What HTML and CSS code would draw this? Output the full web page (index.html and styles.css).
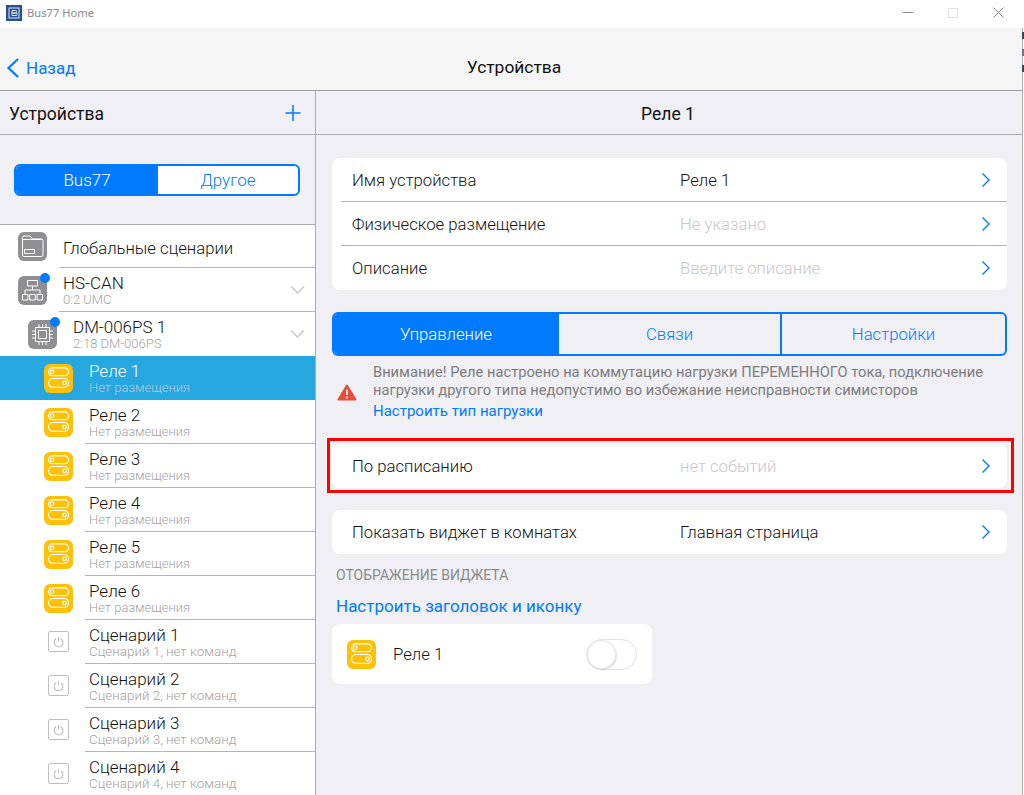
FILE: index.html
```html
<!DOCTYPE html>
<html lang="ru">
<head>
    <meta charset="UTF-8">
    <title>Bus77 Home</title>
    <link rel="stylesheet" href="styles.css">
</head>
<body>
    <svg class="sprites" width="0" height="0">
        <symbol id="relay" viewBox="0 0 29 29">
            <rect width="29" height="29" rx="6" fill="#ffc107"/>
            <g fill="none" stroke="#fff" stroke-width="1.1">
                <rect x="4.5" y="3.9" width="20" height="7.8" rx="3.9"/>
                <rect x="4.5" y="14.5" width="20" height="8.8" rx="4.4"/>
                <circle cx="8.2" cy="7.8" r="1.8"/>
                <circle cx="20.5" cy="18.9" r="1.8"/>
            </g>
        </symbol>
        <symbol id="scene" viewBox="0 0 22 22">
            <rect x=".5" y=".5" width="20" height="20" rx="1.5" fill="#fff" stroke="#bdbdbd"/>
            <g fill="none" stroke="#bdbdbd" stroke-width="1.1">
                <path d="M8 7.8a4.4 4.4 0 1 0 5 0"/>
                <path d="M10.5 5.6v4.6"/>
            </g>
        </symbol>
        <symbol id="chevron" viewBox="0 0 10 16">
            <path d="M1.5 1.5L8 8l-6.500 6.500" fill="none" stroke="#007aff" stroke-width="1.4"/>
        </symbol>
        <symbol id="down" viewBox="0 0 16 10">
            <path d="M2 1.500L8.500 8 15 1.500" fill="none" stroke="#c7c7cc" stroke-width="1.5"/>
        </symbol>
    </svg>

    <header class="titlebar">
        <svg class="app-icon" width="16" height="16" viewBox="0 0 16 16">
            <rect width="16" height="16" fill="#27508f"/>
            <rect x="3" y="3" width="10" height="10" fill="none" stroke="#dbe4f2"/>
            <path d="M6 5.500h3.500a1 1 0 0 1 0 2.500H6zM6 8h4a1.200 1.200 0 0 1 0 2.500H6z" fill="none" stroke="#dbe4f2"/>
        </svg>
        <span class="app-name">Bus77 Home</span>
        <div class="window-buttons">
            <span class="win-min"></span>
            <span class="win-max"></span>
            <svg width="11" height="11" viewBox="0 0 11 11"><path d="M.5.500l10 10M10.500.500l-10 10" stroke="#8a8a8a" fill="none"/></svg>
        </div>
    </header>

    <nav class="navbar">
        <a class="back">
            <svg width="13" height="20" viewBox="0 0 13 20"><path d="M12 1L2.500 10 12 19" fill="none" stroke="#007aff" stroke-width="2.200"/></svg>
            Назад
        </a>
        <div class="nav-title">Устройства</div>
    </nav>

    <div class="columns">
        <aside class="sidebar">
            <div class="side-head">
                <span>Устройства</span>
                <svg width="16" height="16" viewBox="0 0 16 16"><path d="M8 0v16M.5 8h15" stroke="#007aff" stroke-width="1.500"/></svg>
            </div>
            <div class="segment side-segment">
                <div class="seg active">Bus77</div>
                <div class="seg">Другое</div>
            </div>
            <ul class="tree">
                <li class="row lvl0">
                    <svg class="gray-icon" width="29" height="29" viewBox="0 0 29 29">
                        <rect width="29" height="29" rx="6" fill="#8e8e93"/>
                        <path d="M4.500 5.500a1.500 1.500 0 0 1 1.500-1.500h6l2.500 3h9a1.500 1.500 0 0 1 1.500 1.500v14.500a1.500 1.500 0 0 1-1.500 1.500H6a1.500 1.500 0 0 1-1.500-1.500zM4.500 7.500h20M6.500 17.500h10v4h-10z" fill="none" stroke="#fff"/>
                    </svg>
                    <div class="row-text"><div class="name">Глобальные сценарии</div></div>
                </li>
                <li class="row lvl0">
                    <span class="icon-wrap">
                        <svg class="gray-icon" width="29" height="29" viewBox="0 0 29 29">
                            <rect width="29" height="29" rx="6" fill="#8e8e93"/>
                            <path d="M9.500 4.500h10v5.500h-10zM14.500 10v4M7 18v-4h15v4M4.500 18.500h5.500v5.500H4.500zM11.700 18.500h5.500v5.500h-5.500zM19 18.500h5.500v5.500H19z" fill="none" stroke="#fff"/>
                        </svg>
                        <span class="dot"></span>
                    </span>
                    <div class="row-text"><div class="name">HS-CAN</div><div class="sub">0:2 UMC</div></div>
                    <svg class="down" width="16" height="10"><use href="#down"/></svg>
                </li>
                <li class="row lvl1">
                    <span class="icon-wrap">
                        <svg class="gray-icon" width="29" height="29" viewBox="0 0 29 29">
                            <rect width="29" height="29" rx="6" fill="#8e8e93"/>
                            <path d="M7.500 7.500h14v14h-14zM10.500 10.500h8v8h-8zM11 4v3M14.500 4v3M18 4v3M11 22v3M14.500 22v3M18 22v3M4 11h3M4 14.500h3M4 18h3M22 11h3M22 14.500h3M22 18h3" fill="none" stroke="#fff"/>
                        </svg>
                        <span class="dot"></span>
                    </span>
                    <div class="row-text"><div class="name">DM-006PS 1</div><div class="sub">2:18 DM-006PS</div></div>
                    <svg class="down" width="16" height="10"><use href="#down"/></svg>
                </li>
                <li class="row lvl2 selected">
                    <svg class="leaf-icon" width="29" height="29"><use href="#relay"/></svg>
                    <div class="row-text"><div class="name">Реле 1</div><div class="sub">Нет размещения</div></div>
                </li>
                <li class="row lvl2">
                    <svg class="leaf-icon" width="29" height="29"><use href="#relay"/></svg>
                    <div class="row-text"><div class="name">Реле 2</div><div class="sub">Нет размещения</div></div>
                </li>
                <li class="row lvl2">
                    <svg class="leaf-icon" width="29" height="29"><use href="#relay"/></svg>
                    <div class="row-text"><div class="name">Реле 3</div><div class="sub">Нет размещения</div></div>
                </li>
                <li class="row lvl2">
                    <svg class="leaf-icon" width="29" height="29"><use href="#relay"/></svg>
                    <div class="row-text"><div class="name">Реле 4</div><div class="sub">Нет размещения</div></div>
                </li>
                <li class="row lvl2">
                    <svg class="leaf-icon" width="29" height="29"><use href="#relay"/></svg>
                    <div class="row-text"><div class="name">Реле 5</div><div class="sub">Нет размещения</div></div>
                </li>
                <li class="row lvl2">
                    <svg class="leaf-icon" width="29" height="29"><use href="#relay"/></svg>
                    <div class="row-text"><div class="name">Реле 6</div><div class="sub">Нет размещения</div></div>
                </li>
                <li class="row lvl2 scene">
                    <svg class="leaf-icon" width="22" height="22"><use href="#scene"/></svg>
                    <div class="row-text"><div class="name">Сценарий 1</div><div class="sub">Сценарий 1, нет команд</div></div>
                </li>
                <li class="row lvl2 scene">
                    <svg class="leaf-icon" width="22" height="22"><use href="#scene"/></svg>
                    <div class="row-text"><div class="name">Сценарий 2</div><div class="sub">Сценарий 2, нет команд</div></div>
                </li>
                <li class="row lvl2 scene">
                    <svg class="leaf-icon" width="22" height="22"><use href="#scene"/></svg>
                    <div class="row-text"><div class="name">Сценарий 3</div><div class="sub">Сценарий 3, нет команд</div></div>
                </li>
                <li class="row lvl2 scene">
                    <svg class="leaf-icon" width="22" height="22"><use href="#scene"/></svg>
                    <div class="row-text"><div class="name">Сценарий 4</div><div class="sub">Сценарий 4, нет команд</div></div>
                </li>
            </ul>
        </aside>

        <main class="detail">
            <div class="detail-head">Реле 1</div>
            <div class="detail-body">
                <section class="card">
                    <div class="line"><span class="line-label">Имя устройства</span><span class="line-value">Реле 1</span><svg width="10" height="16"><use href="#chevron"/></svg></div>
                    <div class="line"><span class="line-label">Физическое размещение</span><span class="line-value muted">Не указано</span><svg width="10" height="16"><use href="#chevron"/></svg></div>
                    <div class="line"><span class="line-label">Описание</span><span class="line-value muted">Введите описание</span><svg width="10" height="16"><use href="#chevron"/></svg></div>
                </section>

                <div class="segment tabs">
                    <div class="seg active">Управление</div>
                    <div class="seg">Связи</div>
                    <div class="seg">Настройки</div>
                </div>

                <div class="warning">
                    <svg width="20" height="17" viewBox="0 0 20 17">
                        <path d="M10 1.500L18.500 15.500H1.500z" fill="#e74c3c" stroke="#e74c3c" stroke-width="2" stroke-linejoin="round"/>
                        <path d="M10 5.500v5.500M10 12.500v2" stroke="#fff" stroke-width="1.600"/>
                    </svg>
                    <div class="warning-text">
                        <p>Внимание! Реле настроено на коммутацию нагрузки ПЕРЕМЕННОГО тока, подключение нагрузки другого типа недопустимо во избежание неисправности симисторов</p>
                        <a>Настроить тип нагрузки</a>
                    </div>
                </div>

                <div class="highlight">
                    <section class="card">
                        <div class="line"><span class="line-label">По расписанию</span><span class="line-value muted">нет событий</span><svg width="10" height="16"><use href="#chevron"/></svg></div>
                    </section>
                </div>

                <section class="card widget-room">
                    <div class="line"><span class="line-label">Показать виджет в комнатах</span><span class="line-value">Главная страница</span><svg width="10" height="16"><use href="#chevron"/></svg></div>
                </section>

                <div class="caption">ОТОБРАЖЕНИЕ ВИДЖЕТА</div>
                <a class="config-link">Настроить заголовок и иконку</a>

                <section class="card widget">
                    <svg width="29" height="29"><use href="#relay"/></svg>
                    <span class="widget-name">Реле 1</span>
                    <span class="toggle"><span class="knob"></span></span>
                </section>
            </div>
        </main>
    </div>
    <div class="edge-mark"></div>
</body>
</html>
```

FILE: styles.css
```css
* {
    box-sizing: border-box;
}

html, body {
    height: 100%;
}

body {
    margin: 0;
    height: 795px;
    overflow: hidden;
    display: flex;
    flex-direction: column;
    background: #efeff4;
    color: #111;
    font-family: Roboto, "Liberation Sans", sans-serif;
    font-weight: 300;
    font-size: 16.7px;
}

.sprites {
    position: absolute;
}

a {
    color: #007aff;
}

/* window title */
.titlebar {
    height: 28px;
    flex: none;
    background: #fff;
    display: flex;
    align-items: center;
    padding: 0 0 3px 6px;
}

.app-icon {
    margin-right: 5px;
}

.app-name {
    font-family: "Noto Sans", sans-serif;
    font-weight: 400;
    font-size: 11.2px;
    color: #8a8a8a;
}

.window-buttons {
    margin-left: auto;
    display: flex;
    align-items: center;
    gap: 35px;
    padding-right: 20px;
}

.win-min {
    width: 10px;
    height: 1px;
    background: #8a8a8a;
}

.win-max {
    width: 10px;
    height: 10px;
    border: 1px solid #e3e3e3;
}

/* top bar */
.navbar {
    height: 63px;
    flex: none;
    background: #f5f5f5;
    border-bottom: 1px solid #9c9c9c;
    display: flex;
    align-items: flex-end;
    justify-content: center;
    position: relative;
    padding-bottom: 13px;
}

.nav-title {
    font-size: 17.4px;
    font-weight: 400;
    line-height: 20px;
    margin-left: 4px;
}

.back {
    position: absolute;
    left: 6px;
    bottom: 12px;
    display: flex;
    align-items: center;
    gap: 7px;
    font-size: 17px;
    line-height: 20px;
    font-weight: 400;
}

.columns {
    flex: 1;
    display: flex;
    min-height: 0;
}

/* left column */
.sidebar {
    width: 316px;
    flex: none;
    border-right: 1px solid #ababab;
    overflow: hidden;
}

.side-head {
    height: 44px;
    border-bottom: 1px solid #ababab;
    display: flex;
    align-items: center;
    justify-content: space-between;
    padding: 2px 14px 0 9px;
    font-size: 17.5px;
    font-weight: 400;
}

.side-head svg {
    margin-top: -2px;
}

.segment {
    display: flex;
    border: 2px solid #007aff;
    border-radius: 6px;
    overflow: hidden;
    color: #007aff;
    background: #fff;
}

.seg {
    flex: 1;
    display: flex;
    align-items: center;
    justify-content: center;
}

.seg.active {
    background: #007aff;
    color: #fff;
}

.side-segment {
    height: 32px;
    margin: 29px 15px 28px 14px;
    font-size: 17px;
}

.side-segment .seg.active {
    flex: 0 0 142px;
}

.tree {
    list-style: none;
    margin: 0;
    padding: 0;
    background: #fff;
    border-top: 1px solid #ababab;
}

.row {
    height: 44px;
    display: flex;
    align-items: center;
    position: relative;
}

.row:first-child {
    height: 43px;
}

.row:first-child .row-text {
    padding-top: 3px;
}

.row:first-child .name {
    font-size: 16.7px;
}

.row::after {
    content: "";
    position: absolute;
    right: 0;
    bottom: 0;
    height: 1px;
    background: #b5b5b5;
}

.lvl0 {
    padding-left: 18px;
}

.lvl0::after {
    left: 59px;
}

.lvl1 {
    padding-left: 28px;
}

.lvl1::after {
    display: none;
}

.lvl2 {
    padding-left: 44px;
}

.lvl2::after {
    left: 85px;
}

.scene .leaf-icon {
    margin: 0 4px;
}

.icon-wrap {
    position: relative;
    display: flex;
}

.dot {
    position: absolute;
    top: -3px;
    right: -3px;
    width: 10px;
    height: 10px;
    border-radius: 50%;
    background: #007aff;
}

.row-text {
    margin-left: 16px;
    flex: 1;
}

.scene .row-text {
    margin-left: 15px;
}

.name {
    font-size: 17px;
    line-height: 19px;
}

.sub {
    font-size: 13px;
    line-height: 14px;
    color: #a3a3a3;
}

.scene .sub {
    font-size: 13.4px;
}

.down {
    margin-right: 10px;
}

.selected {
    background: #27a7e0;
    color: #fff;
}

.selected .sub {
    color: #b7c9d4;
}

.selected::after {
    display: none;
}

/* right column */
.detail {
    flex: 1;
    min-width: 0;
}

.detail-head {
    height: 44px;
    border-bottom: 1px solid #ababab;
    display: flex;
    align-items: center;
    justify-content: center;
    padding: 2px 4px 0 0;
    font-size: 17.5px;
    font-weight: 400;
}

.detail-body {
    padding: 23px 17px 0 16px;
    display: flex;
    flex-direction: column;
}

.card {
    background: #fff;
    border-radius: 8px;
}

.line {
    height: 44px;
    display: flex;
    align-items: center;
    padding: 0 16px 0 20px;
    position: relative;
}

.line:not(:last-child)::after {
    content: "";
    position: absolute;
    left: 9px;
    right: 0;
    bottom: 0;
    height: 1px;
    background: #b5b5b5;
}

.line-label {
    width: 328px;
    flex: none;
}

.line-value {
    flex: 1;
}

.muted {
    color: #c7c7cc;
}

.tabs {
    height: 44px;
    margin-top: 22px;
    background: #efeff4;
}

.tabs .seg.active {
    flex: 0 0 224px;
}

.tabs .seg:nth-child(2) {
    flex: 0 0 222px;
    border-left: 1px solid #007aff;
}

.tabs .seg:last-child {
    border-left: 2px solid #007aff;
}

.warning {
    display: flex;
    align-items: center;
    gap: 16px;
    margin-top: 8px;
    padding-left: 5px;
}

.warning svg {
    flex: none;
}

.warning-text p {
    margin: 0;
    font-size: 14.7px;
    line-height: 17.5px;
    color: #7d7d7d;
    font-weight: 400;
}

.warning-text a {
    display: block;
    margin-top: 3px;
    font-size: 15px;
    line-height: 18px;
    font-weight: 400;
}

.highlight {
    border: 3px solid #f00;
    margin: 18px -7px 0 -5px;
    padding: 3px 4px 2px 2px;
}

.widget-room {
    margin-top: 17px;
}

.caption {
    margin: 12px 0 0 4px;
    font-size: 14px;
    line-height: 18px;
    color: #8a8a8a;
    font-weight: 400;
}

.config-link {
    margin: 12px 0 0 4px;
    font-size: 17px;
    line-height: 20px;
    font-weight: 400;
}

.widget {
    width: 320px;
    height: 60px;
    margin-top: 8px;
    display: flex;
    align-items: center;
    padding: 0 15px;
}

.widget-name {
    margin-left: 17px;
    flex: 1;
}

.toggle {
    width: 51px;
    height: 31px;
    border-radius: 16px;
    border: 1px solid #e2e2e2;
    background: #fff;
}

.knob {
    display: block;
    width: 29px;
    height: 29px;
    border-radius: 50%;
    background: #fff;
    border: 1px solid #e6e6e6;
    box-shadow: 1px 1px 2px rgba(0, 0, 0, 0.12);
}

.edge-mark {
    position: absolute;
    top: 28px;
    bottom: 0;
    right: 0;
    width: 2px;
    background:
        linear-gradient(transparent 4px, #3a4654 4px 11px, transparent 11px 21px, #6d7480 21px 28px, transparent 28px 37px, #3a4654 37px 44px, transparent 44px),
        linear-gradient(90deg, #b0b0b0 1px, #fff 1px);
}
```
